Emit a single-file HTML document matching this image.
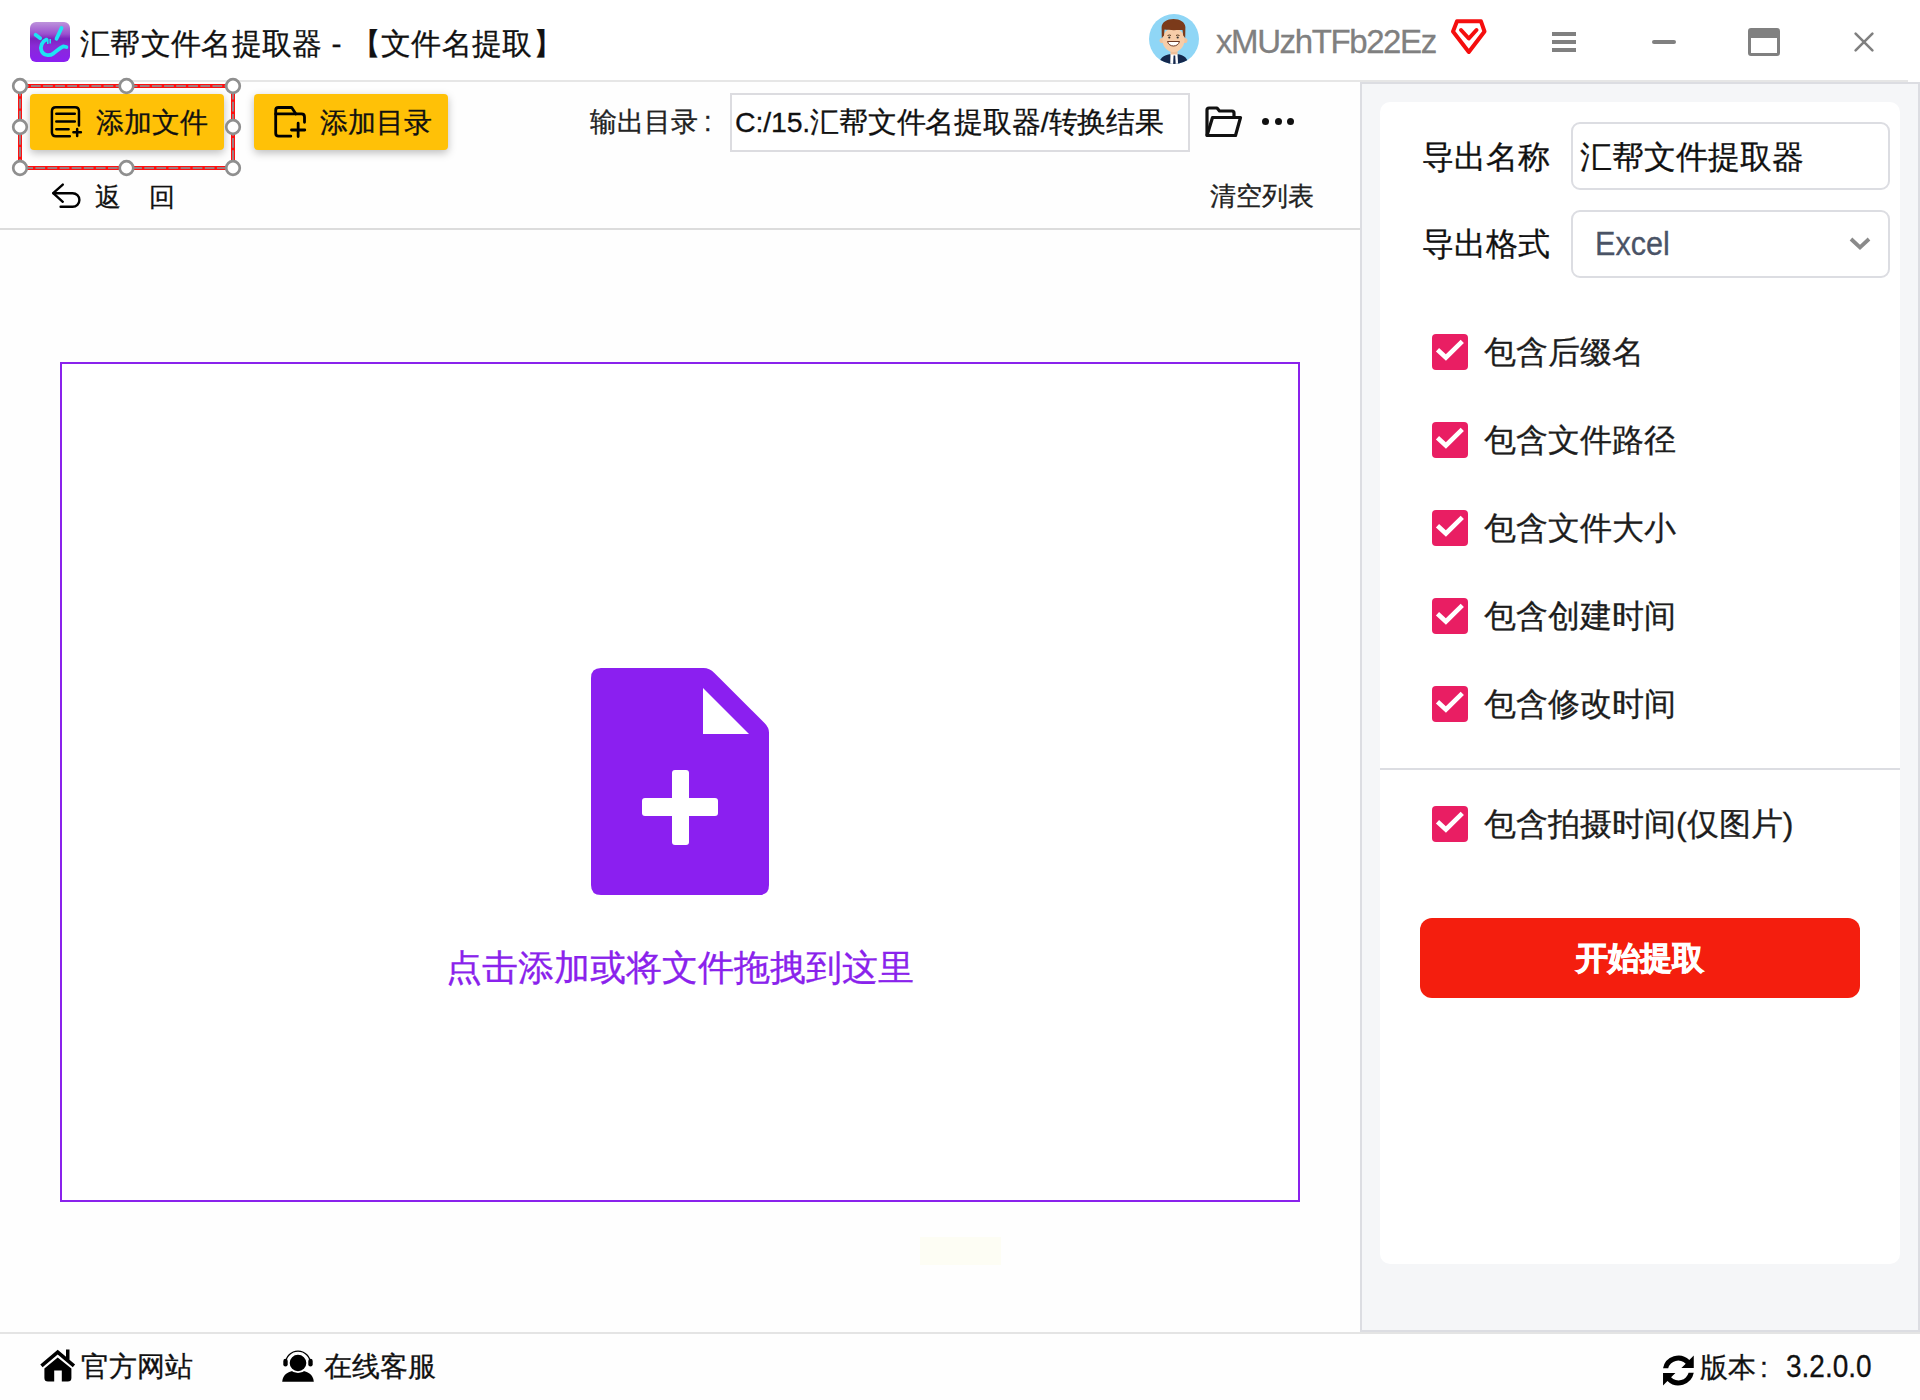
<!DOCTYPE html>
<html><head><meta charset="utf-8">
<style>
*{box-sizing:border-box;margin:0;padding:0}
html,body{width:1920px;height:1400px;overflow:hidden;background:#fefefe;font-family:"Liberation Sans",sans-serif;color:#111}
.abs{position:absolute}
svg{position:absolute;overflow:visible}
.t{position:absolute;white-space:nowrap;-webkit-text-stroke:0.3px currentColor}
.btn{position:absolute;background:#ffc107;border-radius:4px;box-shadow:0 3px 8px rgba(0,0,0,.26)}
.lbl{position:absolute;font-size:32px;line-height:44px;color:#111;white-space:nowrap;-webkit-text-stroke:0.3px currentColor}
.inp{position:absolute;border:2px solid #dcdde2;border-radius:9px;background:#fff}
.cbl{position:absolute;font-size:32px;line-height:44px;color:#1d1d1d;white-space:nowrap;-webkit-text-stroke:0.3px currentColor}
</style></head><body>
<!-- title bar -->
<div class="abs" style="left:0;top:0;width:1920px;height:80px;background:#fff"></div>
<div class="abs" style="left:26px;top:80px;width:1882px;height:2px;background:#e6e6e6"></div>
<!-- app icon -->
<svg style="left:30px;top:22px" width="40" height="40" viewBox="0 0 40 40">
<defs><linearGradient id="ig" x1="0" y1="0" x2="0" y2="1">
<stop offset="0" stop-color="#bd93dc"/><stop offset="0.3" stop-color="#9b50cf"/><stop offset="0.42" stop-color="#7b22bd"/><stop offset="0.6" stop-color="#8a2ad6"/><stop offset="1" stop-color="#8a1ff2"/></linearGradient></defs>
<rect x="0" y="0" width="40" height="40" rx="6" fill="url(#ig)"/>
<g stroke="#1ee4f4" stroke-width="3.8" stroke-linecap="round" fill="none">
<path d="M5.6 12.8 L10.2 16.2"/><path d="M31.5 6 L26.5 16.8"/>
<path d="M16.5 17.6 C12 19.5 9.8 24.5 11.6 29 C13.6 33.6 19.5 34.2 23.2 31.6 C26.8 29 29.8 25.6 33.6 24.4 L36.4 25"/>
</g>
<path d="M17.8 17.5 V22 M20.2 17 V21.5" stroke="#1ee4f4" stroke-width="1.6"/>
</svg>
<div class="t" style="left:80px;top:22px;font-size:30px;line-height:44px;letter-spacing:0.35px;color:#111">汇帮文件名提取器 - 【文件名提取】</div>

<!-- avatar -->
<svg style="left:1149px;top:14px" width="50" height="50" viewBox="0 0 50 50">
<defs><clipPath id="ac"><circle cx="25" cy="25" r="25"/></clipPath></defs>
<circle cx="25" cy="25" r="25" fill="#8fd6f6"/>
<g clip-path="url(#ac)">
<path d="M10 52 C10 43 16 40 25 40 C34 40 39 43 39.5 52 Z" fill="#14284d"/>
<path d="M21.5 39.5 L28.5 39.5 L29.2 52 L21.2 52 Z" fill="#fff"/>
<path d="M24.6 41.5 L26.2 41.5 L26.8 52 L24 52 Z" fill="#14284d"/>
<rect x="21.5" y="34" width="7" height="6.5" fill="#efbf98"/>
<circle cx="13.2" cy="26.5" r="2.6" fill="#f1c29c"/><circle cx="35.8" cy="26.5" r="2.6" fill="#f1c29c"/>
<ellipse cx="24.5" cy="26" rx="11" ry="12" fill="#f7cda9"/>
<path d="M12.8 24 L12.6 13 C13 8 18 4.9 24.5 4.9 C31 4.9 36 8 36.4 13 L36.2 24 L34.2 21.5 L33.5 16 C30 16 20 16.5 15.5 15.5 L15 21.5 Z" fill="#7b3a1a"/>
<path d="M18.5 27.5 C20 33.5 29 33.5 30.5 27.5 Z" fill="#fff" stroke="#5a2410" stroke-width="0.9"/>
<path d="M18.5 21.5 Q20.5 20.5 22 21.5 M27 21.5 Q28.5 20.5 30.5 21.5" stroke="#4a2a10" stroke-width="0.9" fill="none"/>
<circle cx="20.3" cy="23.5" r="1.1" fill="#333"/><circle cx="28.7" cy="23.5" r="1.1" fill="#333"/>
</g>
</svg>
<div class="t" style="left:1216px;top:19.5px;font-size:33px;line-height:44px;letter-spacing:-1.4px;color:#808080">xMUzhTFb22Ez</div>
<!-- vip diamond -->
<svg style="left:1451px;top:19px" width="36" height="36" viewBox="0 0 36 36">
<path d="M6 2.3 L30 2.3 L33.5 12.5 L17.8 33 L2 12.5 Z" fill="none" stroke="#f50e0e" stroke-width="4" stroke-linejoin="round"/>
<path d="M10 11 L17.8 19.5 L25.5 11" fill="none" stroke="#f50e0e" stroke-width="4" stroke-linecap="round" stroke-linejoin="round"/>
</svg>
<!-- window controls -->
<div class="abs" style="left:1552px;top:32px;width:24px;height:4px;background:#808080"></div>
<div class="abs" style="left:1552px;top:40px;width:24px;height:4px;background:#808080"></div>
<div class="abs" style="left:1552px;top:48px;width:24px;height:4px;background:#808080"></div>
<div class="abs" style="left:1652px;top:40px;width:24px;height:4px;border-radius:2px;background:#808080"></div>
<div class="abs" style="left:1748px;top:28px;width:32px;height:28px;border:3px solid #808080;border-top-width:10px;border-radius:3px"></div>
<svg style="left:1854px;top:32px" width="20" height="20" viewBox="0 0 20 20">
<path d="M1.6 1.6 L18.4 18.4 M18.4 1.6 L1.6 18.4" stroke="#808080" stroke-width="2.6" stroke-linecap="round"/>
</svg>

<!-- toolbar -->
<div class="btn" style="left:30px;top:94px;width:194px;height:56px"></div>
<div class="btn" style="left:254px;top:94px;width:194px;height:56px"></div>
<!-- doc icon -->
<svg style="left:45px;top:100px" width="42" height="42" viewBox="0 0 42 42">
<path d="M24.8 36.3 L10.9 36.3 Q6.9 36.3 6.9 32.3 L6.9 11.2 Q6.9 7.26 10.9 7.26 L30 7.26 Q33.97 7.26 33.97 11.2 L33.97 25.4" fill="none" stroke="#000" stroke-width="2.5" stroke-linecap="round"/>
<path d="M11.3 13.86 H29.8 M11.3 21.45 H29.8 M11.3 29.34 H23.6" stroke="#000" stroke-width="2.5" stroke-linecap="round"/>
<path d="M28.4 32.25 H35.9 M32.16 29 V35.9" stroke="#000" stroke-width="2.5" stroke-linecap="round"/>
</svg>
<div class="t" style="left:96px;top:102px;font-size:28.2px;line-height:40px;color:#111">添加文件</div>
<!-- folder plus icon -->
<svg style="left:268px;top:100px" width="42" height="42" viewBox="0 0 42 42">
<path d="M22.8 36.2 L10.7 36.2 Q7.7 36.2 7.7 33.2 L7.7 10.2 Q7.7 7.5 10.4 7.5 L23.7 7.5 L27.9 13.95" fill="none" stroke="#000" stroke-width="2.8" stroke-linecap="round" stroke-linejoin="round"/>
<path d="M7.7 13.95 L33.5 13.95 Q36.5 13.95 36.5 16.95 L36.5 22.35" fill="none" stroke="#000" stroke-width="2.8" stroke-linecap="round"/>
<path d="M23.5 30 H36.8 M30.15 23.2 V36.5" stroke="#000" stroke-width="2.8" stroke-linecap="round"/>
</svg>
<div class="t" style="left:320px;top:102px;font-size:28.2px;line-height:40px;color:#111">添加目录</div>

<!-- selection box -->
<svg style="left:0;top:0" width="260" height="180" viewBox="0 0 260 180">
<path d="M20 86 H233 V168 H20 Z" fill="none" stroke="#ff1010" stroke-width="4"/>
<path d="M20 86 H233 V168 H20 Z" fill="none" stroke="#80a0a4" stroke-width="1.5" stroke-dasharray="9.7 2.4" stroke-dashoffset="1.1"/>
<g fill="#fff" stroke="#8f8f8f" stroke-width="2.7">
<circle cx="20" cy="86" r="6.8"/><circle cx="126.5" cy="86" r="6.8"/><circle cx="233" cy="86" r="6.8"/>
<circle cx="20" cy="127" r="6.8"/><circle cx="233" cy="127" r="6.8"/>
<circle cx="20" cy="168" r="6.8"/><circle cx="126.5" cy="168" r="6.8"/><circle cx="233" cy="168" r="6.8"/>
</g>
</svg>

<!-- back -->
<svg style="left:50px;top:182px" width="34" height="30" viewBox="0 0 34 30">
<path d="M12.8 2.6 L3.2 11.2 L12.8 19.8" fill="none" stroke="#000" stroke-width="2.4" stroke-linecap="round" stroke-linejoin="round"/>
<path d="M3.5 11.2 H22.6 A6.8 6.8 0 0 1 22.6 24.8 H10.6" fill="none" stroke="#000" stroke-width="2.4" stroke-linecap="round"/>
</svg>
<div class="t" style="left:95px;top:177px;font-size:25.5px;line-height:40px;color:#111">返</div>
<div class="t" style="left:149px;top:177px;font-size:25.5px;line-height:40px;color:#111">回</div>

<div class="t" style="left:590px;top:102px;font-size:27px;line-height:40px;color:#222">输出目录</div><div class="t" style="left:704px;top:102px;font-size:27px;line-height:40px;color:#222">:</div>
<div class="abs" style="left:730px;top:93px;width:460px;height:59px;border:2px solid #dcdce0;background:#fff"></div>
<div class="t" style="left:735px;top:101px;font-size:28.5px;letter-spacing:-0.16px;line-height:42px;color:#111">C:/15.汇帮文件名提取器/转换结果</div>
<!-- folder open icon -->
<svg style="left:1205px;top:106px" width="38" height="32" viewBox="0 0 38 32">
<path d="M2 29.5 L2 4 Q2 2 4 2 L12 2 L14.5 5 L27 5 Q29 5 29 7 L29 10" fill="none" stroke="#111" stroke-width="3.2" stroke-linejoin="round"/>
<path d="M2 29.5 L7.5 11.5 L35.5 11.5 L30.5 29.5 Z" fill="none" stroke="#111" stroke-width="3.2" stroke-linejoin="round"/>
</svg>
<div class="abs" style="left:1262px;top:118px;width:7px;height:7px;border-radius:50%;background:#111"></div>
<div class="abs" style="left:1275px;top:118px;width:7px;height:7px;border-radius:50%;background:#111"></div>
<div class="abs" style="left:1287px;top:118px;width:7px;height:7px;border-radius:50%;background:#111"></div>
<div class="t" style="left:1210px;top:176px;font-size:26px;line-height:40px;color:#222">清空列表</div>
<div class="abs" style="left:0;top:228px;width:1360px;height:2px;background:#dcdcdc"></div>

<!-- drop zone -->
<div class="abs" style="left:60px;top:362px;width:1240px;height:840px;border:2px solid #8a22ec;background:#fff"></div>
<svg style="left:591px;top:668px" width="178" height="227" viewBox="0 0 178 227">
<path d="M10 0 L112.5 0 Q118.5 0 123.4 4.9 L173.5 55 Q178 59.5 178 64.6 L178 217 Q178 227 168 227 L10 227 Q0 227 0 217 L0 10 Q0 0 10 0 Z" fill="#8b1ff0"/>
<path d="M112 20 L158 66 L112 66 Z" fill="#fff"/>
<rect x="81" y="102" width="17" height="75" rx="3" fill="#fff"/>
<rect x="51" y="130" width="76" height="18" rx="3" fill="#fff"/>
</svg>
<div class="t" style="left:446px;top:944px;font-size:36px;line-height:48px;color:#8a22ec">点击添加或将文件拖拽到这里</div>
<div class="abs" style="left:920px;top:1237px;width:81px;height:28px;background:#fdfdf4"></div>

<!-- right panel -->
<div class="abs" style="left:1360px;top:82px;width:560px;height:1250px;background:#f5f6f8;border:2px solid #dcdde2"></div>
<div class="abs" style="left:1380px;top:102px;width:520px;height:1162px;background:#fff;border-radius:10px"></div>
<div class="lbl" style="left:1422px;top:135px">导出名称</div>
<div class="inp" style="left:1571px;top:122px;width:319px;height:68px"></div>
<div class="lbl" style="left:1580px;top:135px">汇帮文件提取器</div>
<div class="lbl" style="left:1422px;top:222px">导出格式</div>
<div class="inp" style="left:1571px;top:210px;width:319px;height:68px"></div>
<div class="lbl" style="left:1595px;top:220.5px;font-size:34px;color:#4a5366;transform:scaleX(0.9);transform-origin:0 0">Excel</div>
<svg style="left:1849px;top:237px" width="22" height="14" viewBox="0 0 22 14">
<path d="M2 2 L11 10.5 L20 2" fill="none" stroke="#8a8a8a" stroke-width="3.8"/>
</svg>

<svg style="left:0;top:0" width="1920" height="1400" viewBox="0 0 1920 1400">
<g transform="translate(1432 334)"><rect x="0" y="0" width="36" height="36" rx="4" fill="#e91e63"/><path d="M5.5 15.7 L13.9 23.5 L30.3 7.3" fill="none" stroke="#fff" stroke-width="4.6"/></g>
<g transform="translate(1432 422)"><rect x="0" y="0" width="36" height="36" rx="4" fill="#e91e63"/><path d="M5.5 15.7 L13.9 23.5 L30.3 7.3" fill="none" stroke="#fff" stroke-width="4.6"/></g>
<g transform="translate(1432 510)"><rect x="0" y="0" width="36" height="36" rx="4" fill="#e91e63"/><path d="M5.5 15.7 L13.9 23.5 L30.3 7.3" fill="none" stroke="#fff" stroke-width="4.6"/></g>
<g transform="translate(1432 598)"><rect x="0" y="0" width="36" height="36" rx="4" fill="#e91e63"/><path d="M5.5 15.7 L13.9 23.5 L30.3 7.3" fill="none" stroke="#fff" stroke-width="4.6"/></g>
<g transform="translate(1432 686)"><rect x="0" y="0" width="36" height="36" rx="4" fill="#e91e63"/><path d="M5.5 15.7 L13.9 23.5 L30.3 7.3" fill="none" stroke="#fff" stroke-width="4.6"/></g>
<g transform="translate(1432 806)"><rect x="0" y="0" width="36" height="36" rx="4" fill="#e91e63"/><path d="M5.5 15.7 L13.9 23.5 L30.3 7.3" fill="none" stroke="#fff" stroke-width="4.6"/></g>
</svg>
<div class="cbl" style="left:1484px;top:330px">包含后缀名</div>
<div class="cbl" style="left:1484px;top:418px">包含文件路径</div>
<div class="cbl" style="left:1484px;top:506px">包含文件大小</div>
<div class="cbl" style="left:1484px;top:594px">包含创建时间</div>
<div class="cbl" style="left:1484px;top:682px">包含修改时间</div>
<div class="abs" style="left:1380px;top:768px;width:520px;height:2px;background:#dcdde2"></div>
<div class="cbl" style="left:1484px;top:802px">包含拍摄时间(仅图片)</div>

<div class="abs" style="left:1420px;top:918px;width:440px;height:80px;border-radius:12px;background:#f41e0e"></div>
<div class="t" style="left:1420px;top:936px;width:440px;text-align:center;font-size:32px;line-height:44px;font-weight:bold;-webkit-text-stroke:0.9px #fff;color:#fff">开始提取</div>

<!-- footer -->
<div class="abs" style="left:0;top:1332px;width:1920px;height:2px;background:#e4e4e4"></div>
<svg style="left:40px;top:1349px" width="36" height="33" viewBox="0 0 36 33">
<path d="M17.7 0.8 L0.3 15.6 L2.6 18.2 L17.7 5.4 L32.8 18.2 L35.1 15.6 L29.5 10.8 L29.5 0.6 L26 0.6 L26 7.8 Z" fill="#000"/>
<path d="M4.4 19.6 L17.7 8.6 L31.4 19.6 L31.4 29 Q31.4 32.6 27.8 32.6 L21.8 32.6 L21.8 21.5 L14.2 21.5 L14.2 32.6 L8 32.6 Q4.4 32.6 4.4 29 Z" fill="#000"/>
</svg>
<div class="t" style="left:81px;top:1347px;font-size:28px;line-height:40px;color:#111">官方网站</div>
<svg style="left:282px;top:1349px" width="32" height="33" viewBox="0 0 32 33">
<path d="M0.2 32.7 C0.7 25.5 6 21.5 16 21.5 C26 21.5 31.3 25.5 31.8 32.7 Z" fill="#000"/>
<circle cx="16" cy="14" r="9.2" fill="#000" stroke="#fff" stroke-width="1.8"/>
<path d="M3.6 14.5 A12.4 12.4 0 0 1 28.4 14.5" fill="none" stroke="#000" stroke-width="1.3"/>
<rect x="1.3" y="9.8" width="4.4" height="7.6" rx="2.2" fill="#000"/>
<rect x="26.3" y="9.8" width="4.4" height="7.6" rx="2.2" fill="#000"/>
</svg>
<div class="t" style="left:324px;top:1347px;font-size:28px;line-height:40px;color:#111">在线客服</div>
<svg style="left:1661.5px;top:1353.5px" width="33" height="33" viewBox="0 0 32 32">
<path d="M30.8 1.5 L30.8 13.5 L18.8 13.5 L23 9.4 A10.2 10.2 0 0 0 6 13.8 L1 13.8 A15.2 15.2 0 0 1 26.5 5.9 Z" fill="#000"/>
<path d="M1 30.5 L1 18.5 L13 18.5 L8.8 22.6 A10.2 10.2 0 0 0 25.8 18.2 L30.8 18.2 A15.2 15.2 0 0 1 5.3 26.1 Z" fill="#000"/>
</svg>
<div class="t" style="left:1700px;top:1347px;font-size:28.3px;line-height:40px;color:#111">版本</div>
<div class="t" style="left:1760px;top:1347px;font-size:28.3px;line-height:40px;color:#111">:</div>
<div class="t" style="left:1786px;top:1345.5px;font-size:32px;line-height:40px;color:#111;transform:scaleX(0.875);transform-origin:0 0">3.2.0.0</div>

</body></html>
